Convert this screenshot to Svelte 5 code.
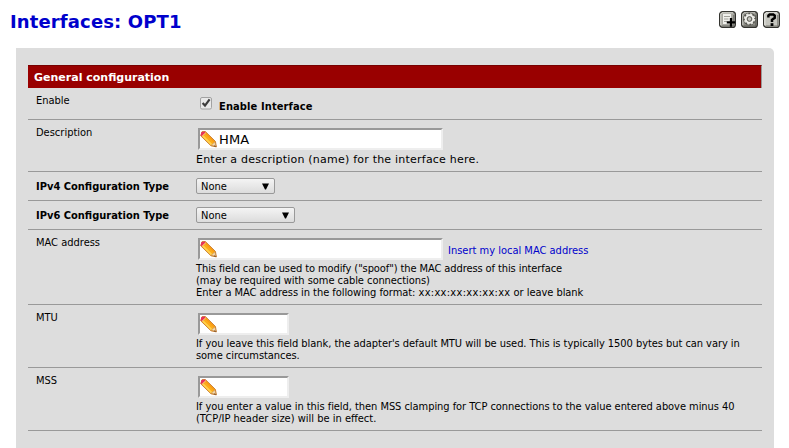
<script>
  const mac = 'This field can be used to modify ("spoof") the MAC address of this interface';
</script>

{#snippet pencil()}
  <svg class="pencil" width="17" height="17" viewBox="0 0 17 17">
    <path d="M2 .7 L5.4 .6 L15.4 10.4 L16.4 15.9 L11 14.8 L.7 4.8 Z" fill="#fdab1a" stroke="#c4742a" stroke-width=".9" />
    <path d="M3 5.2 L11.6 13.6" stroke="#ffd24e" stroke-width="1.8" />
    <path d="M5.8 2.6 L14.2 10.9" stroke="#f79a14" stroke-width="1.3" />
    <path d="M11.4 14.1 L14.8 10.9 L15.9 15.5 Z" fill="#f7d9ac" stroke="#b98a55" stroke-width=".5" />
    <path d="M14.6 14.2 L16.4 16 L14 15.3Z" fill="#5a3a20" />
    <path d="M.7 4.4 L1.3 1.2 L4.6 .6 L5.4 1.4 L1.7 5 Z" fill="#e8305c" />
    <path d="M1.9 5.4 L5.9 1.7" stroke="#efb3a0" stroke-width=".9" />
  </svg>
{/snippet}

{#snippet field(value, small)}
  <div class="field" class:small>{@render pencil()}<span>{value}</span></div>
{/snippet}

{#snippet select(wide)}
  <div class="select" class:wide>
    <span>None</span>
    <svg width="7" height="7" viewBox="0 0 7 7"><path d="M0 .4H7L4 6.6H3Z" fill="#000" /></svg>
  </div>
{/snippet}

<div class="page">
  <header>
    <h1>Interfaces: OPT1</h1>
    <div class="icons">
      <svg width="17" height="17" viewBox="0 0 17 17">
        <rect x=".6" y=".6" width="15.8" height="15.8" rx="3" fill="#a9a9a2" stroke="#33332f" stroke-width="1.2" />
        <path d="M1.8 14V3L3 1.8H14" fill="none" stroke="#deded8" />
        <path d="M3 15H14.8V4" fill="none" stroke="#6d6d67" />
        <path d="M4 3H12V13H4Z" fill="#f0f0ec" />
        <path d="M5 5.5H11M5 8H9.5M5 10.5H8" stroke="#a0a099" />
        <path d="M12 7V15.8M7.8 11.4H16.2" stroke="#000" stroke-width="2.3" />
      </svg>
      <svg width="17" height="17" viewBox="0 0 17 17">
        <rect x=".6" y=".6" width="15.8" height="15.8" rx="3" fill="#8f8f88" stroke="#33332f" stroke-width="1.2" />
        <path d="M1.8 14V3L3 1.8H14" fill="none" stroke="#d0d0ca" />
        <path d="M3 15H14.8V4" fill="none" stroke="#60605a" />
        <circle cx="8.5" cy="8" r="5.6" fill="none" stroke="#55554f" stroke-width="1.8" />
        <circle cx="8.5" cy="8" r="5" fill="none" stroke="#deded8" stroke-width="1.6" stroke-dasharray="2.3 1.6" />
        <circle cx="8.5" cy="8" r="3.7" fill="#9b9b94" stroke="#efefeb" stroke-width="2" />
        <circle cx="8.5" cy="8" r="2.3" fill="#c5c5be" stroke="#60605a" />
      </svg>
      <svg width="17" height="17" viewBox="0 0 17 17">
        <rect x=".6" y=".6" width="15.8" height="15.8" rx="3" fill="#c5c5be" stroke="#33332f" stroke-width="1.2" />
        <path d="M1.8 14V3L3 1.8H14" fill="none" stroke="#eeeee9" />
        <path d="M3 15H14.8V4" fill="none" stroke="#77776f" />
        <path d="M5.4 6.4V4.6L6.6 3.4H10.3L11.7 4.6V6.8L9 8.8V11" fill="none" stroke="#000" stroke-width="2.5" />
        <path d="M7.6 12.2H10.4V15H7.6Z" fill="#000" />
      </svg>
    </div>
  </header>
  <main>
    <div class="title">General configuration</div>
    <div class="row r32">
      <div class="label">Enable</div>
      <div class="check">
        <svg width="12" height="13" viewBox="0 0 12 13">
          <rect x=".5" y=".5" width="11" height="11.5" rx="1.5" fill="#e9e9e9" stroke="#a2a2a2" />
          <path d="M2.6 6L5 8.6L9.6 2.4" fill="none" stroke="#3c3c3c" stroke-width="2.2" />
        </svg>
        <b>Enable Interface</b>
      </div>
    </div>
    <div class="row r52">
      <div class="label">Description</div>
      <div class="cell">
        {@render field('HMA', false)}
        <p class="large">Enter a description (name) for the interface here.</p>
      </div>
    </div>
    <div class="row r29">
      <div class="label mid">IPv4 Configuration Type</div>
      <div class="selcell">{@render select(false)}</div>
    </div>
    <div class="row r29">
      <div class="label mid">IPv6 Configuration Type</div>
      <div class="selcell">{@render select(true)}</div>
    </div>
    <div class="row r75">
      <div class="label">MAC address</div>
      <div class="cell">
        <div class="line">{@render field('', false)}<a href="#mac">Insert my local MAC address</a></div>
        <p><span class="t1">{mac}</span><br /><span class="t2">(may be required with some cable connections)</span><br /><span class="t3">Enter a MAC address in the following format:&nbsp;</span><span class="t4">xx:xx:xx:xx:xx:xx</span><span class="t3">&nbsp;or leave blank</span></p>
      </div>
    </div>
    <div class="row r63">
      <div class="label">MTU</div>
      <div class="cell">
        {@render field('', true)}
        <p><span class="t2">If you leave this field blank, the adapter's default MTU will be used. This is typically 1500 bytes but can vary in<br />some circumstances.</span></p>
      </div>
    </div>
    <div class="row r63">
      <div class="label">MSS</div>
      <div class="cell">
        {@render field('', true)}
        <p><span class="t2">If you enter a value in this field, then MSS clamping for TCP connections to the value entered above minus 40</span><br />(TCP/IP header size) will be in effect.</p>
      </div>
    </div>
  </main>
</div>

<style>
  :global(body) { margin: 0; background: #fff; }
  .page {
    width: 789px; height: 448px; overflow: hidden; display: flex; flex-direction: column;
    font: 11px/12px "DejaVu Sans Condensed", "DejaVu Sans", sans-serif;
    font-stretch: condensed; color: #000; white-space: nowrap;
  }
  header { height: 48px; flex: none; box-sizing: border-box; padding: 11px 9px 0 10px; display: flex; justify-content: space-between; align-items: flex-start; }
  h1 { margin: 0; font: bold 18px/22px "DejaVu Sans", sans-serif; letter-spacing: .13px; color: #0000cc; }
  .icons { display: flex; gap: 5px; }
  svg { display: block; flex: none; }
  main { flex: 1; box-sizing: border-box; margin-left: 16px; width: 758px; padding: 17px 12px 0; background: #ddd; border-top-right-radius: 5px; }
  .title { height: 23px; box-sizing: border-box; padding-left: 6px; background: #990000; color: #fff; font: bold 11px/23px "DejaVu Sans", sans-serif; border-top: 1px solid #700; border-right: 1px solid #999; }
  .row { display: grid; grid-template-columns: 168px 1fr; box-sizing: border-box; border-bottom: 1px solid #999; }
  .r32 { height: 32px; }
  .r52 { height: 52px; }
  .r29 { height: 29px; }
  .r75 { height: 75px; }
  .r63 { height: 63px; }
  .label { padding: 7px 0 0 8px; }
  .mid { padding-top: 2px; align-self: center; font-weight: bold; }
  .cell { padding-top: 8px; }
  .check { display: flex; padding: 9px 0 0 4px; gap: 7px; }
  .check b { margin-top: 4px; letter-spacing: .12px; }
  .field { box-sizing: border-box; width: 245px; height: 22px; margin-left: 2px; display: flex; align-items: center; background: #fff; border: 2px solid #999; border-right-color: #eee; border-bottom-color: #eee; font: 13px/18px "DejaVu Sans", sans-serif; letter-spacing: .1px; }
  .field.small { width: 91px; }
  .pencil { margin-left: -.5px; }
  .field span { margin: 1px 0 0 2.5px; }
  .line { display: flex; align-items: center; }
  a { color: #0000cc; text-decoration: none; margin: 4px 0 0 5px; }
  p { margin: 3px 0 0; }
  .t1 { letter-spacing: -.09px; }
  .t2 { letter-spacing: -.05px; }
  .t3 { letter-spacing: -.05px; }
  .t4 { letter-spacing: .3px; }
  .large { font: 11px/14px "DejaVu Sans", sans-serif; letter-spacing: .22px; }
  .selcell { align-self: center; }
  .select { box-sizing: border-box; width: 79px; height: 16px; padding: 0 5px 0 4px; border: 1px solid #999; border-radius: 2px; background: linear-gradient(#f4f4f4, #dcdcdc); display: flex; align-items: center; justify-content: space-between; }
  .select span { margin-top: 2px; }
  .select.wide { width: 99px; }
</style>
